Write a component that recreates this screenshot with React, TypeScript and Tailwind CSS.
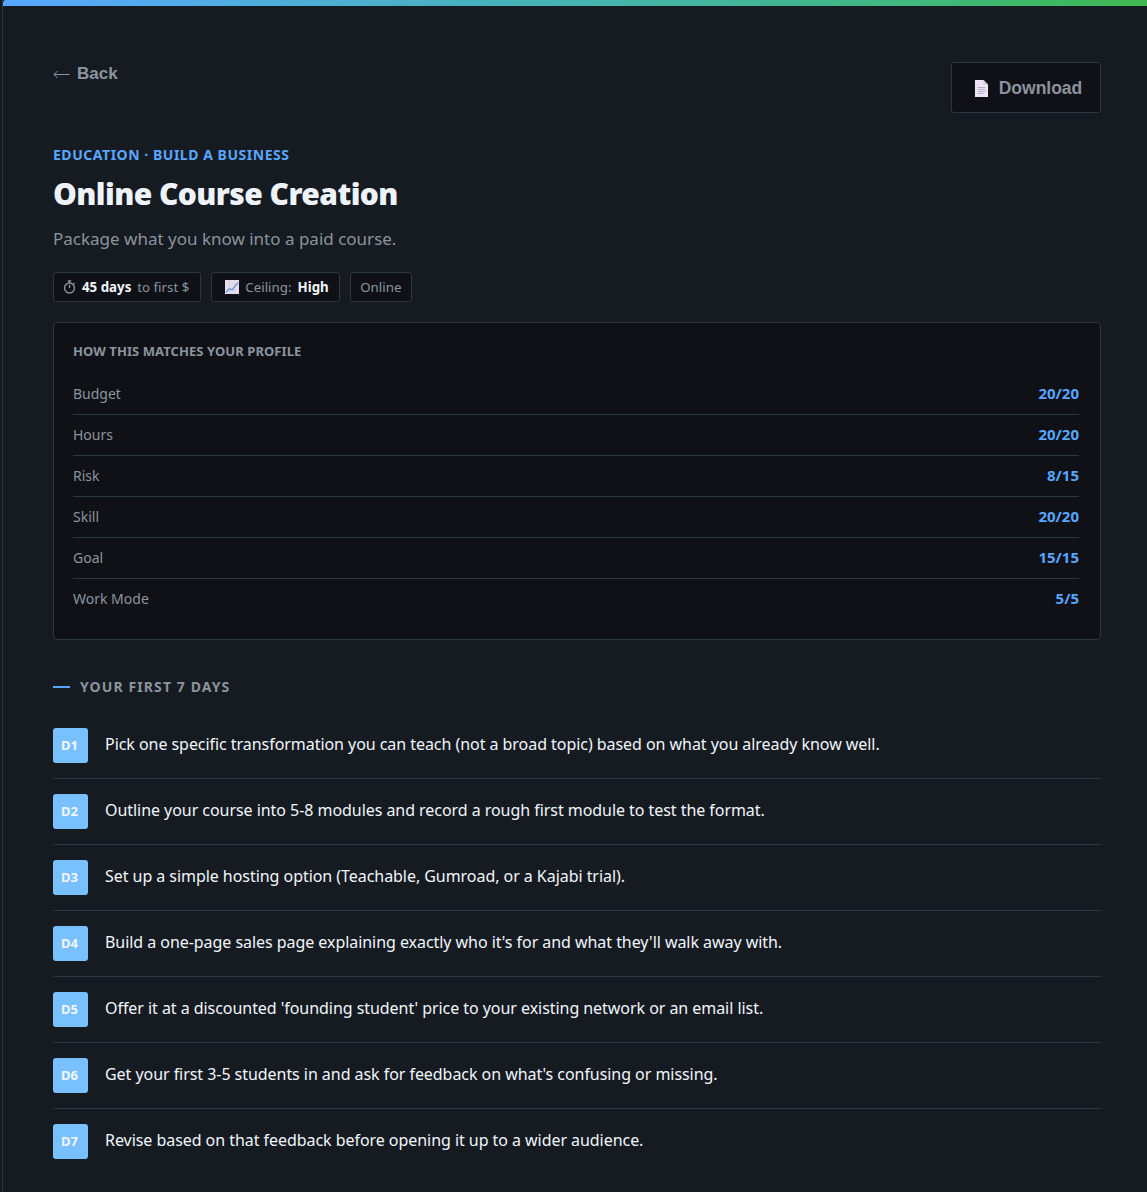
import { FC } from "react";

const SCORES = [
  { label: "Budget", value: "20/20" },
  { label: "Hours", value: "20/20" },
  { label: "Risk", value: "8/15" },
  { label: "Skill", value: "20/20" },
  { label: "Goal", value: "15/15" },
  { label: "Work Mode", value: "5/5" },
];

const DAYS = [
  "Pick one specific transformation you can teach (not a broad topic) based on what you already know well.",
  "Outline your course into 5-8 modules and record a rough first module to test the format.",
  "Set up a simple hosting option (Teachable, Gumroad, or a Kajabi trial).",
  "Build a one-page sales page explaining exactly who it's for and what they'll walk away with.",
  "Offer it at a discounted 'founding student' price to your existing network or an email list.",
  "Get your first 3-5 students in and ask for feedback on what's confusing or missing.",
  "Revise based on that feedback before opening it up to a wider audience.",
];

const ArrowIcon: FC = () => (
  <svg width="17" height="11" viewBox="0 0 17 11" fill="none" stroke="#8b949e" className="mt-[2px] shrink-0">
    <path d="M1 5.5H16.5M4.5 2L1 5.5L4.5 9" strokeWidth="1" />
  </svg>
);

const DocIcon: FC = () => (
  <svg width="13" height="17" viewBox="0 0 13 17" className="shrink-0">
    <path d="M0 0H8.5L13 4.5V17H0Z" fill="#ece6f4" />
    <path d="M8.5 0L13 4.5H8.5Z" fill="#c9c2d6" />
    <path d="M2.5 7.5H10.5M2.5 9.5H10.5M2.5 11.5H10.5M2.5 13.5H8.5" stroke="#a9a0c0" strokeWidth="0.8" />
  </svg>
);

const TimerIcon: FC = () => (
  <svg width="13" height="14" viewBox="0 0 13 14" fill="none" stroke="#8b949e" className="-ml-[1px] shrink-0">
    <circle cx="6.5" cy="8" r="5" strokeWidth="1.4" />
    <path d="M4.8 1H8.2M6.5 1V3M6.5 8V4.8M10.6 3L11.6 4" strokeWidth="1.3" />
  </svg>
);

const ChartIcon: FC = () => (
  <svg width="14" height="14" viewBox="0 0 14 14" className="shrink-0">
    <rect width="14" height="14" fill="#e6e0ee" />
    <path d="M0 4.7H14M0 9.4H14M4.7 0V14M9.4 0V14" stroke="#cfc8dc" strokeWidth="0.5" />
    <path d="M1 12.5L4.5 8.5L7 10L13 2.5" stroke="#6f9fe0" strokeWidth="1.4" fill="none" />
  </svg>
);

const Tag: FC<{ children: React.ReactNode }> = ({ children }) => (
  <div className="flex h-[30px] items-center rounded-[3px] border border-[#30363d] bg-[#0f1117] px-[10px] text-[13.3px] text-[#8b949e]">
    {children}
  </div>
);

export default function App() {
  return (
    <div className="min-h-[1192px] bg-[#161b22] pl-[2px] font-['Noto_Sans',sans-serif]">
      <div className="h-[1192px] overflow-hidden border-l border-[#30363d]">
        <div className="h-[6px] rounded-tl-[3px] bg-gradient-to-r from-[#58a6ff] to-[#3fb950]" />
        <div className="pl-[50px] pr-[46px]">
          <div className="flex items-start justify-between pt-[56px]">
            <button className="mt-[1px] flex h-[20px] items-center gap-[7px] font-['Liberation_Sans',sans-serif] text-[17px] font-bold leading-none text-[#8b949e]">
              <ArrowIcon />
              Back
            </button>
            <button className="flex h-[51px] w-[150px] items-center justify-center gap-[11px] rounded-[3px] border border-[#30363d] bg-[#0f1117] pl-[5px] pt-[1px] font-['Liberation_Sans',sans-serif] text-[17.5px] font-bold text-[#8b949e]">
              <DocIcon />
              Download
            </button>
          </div>
          <p className="mt-[33px] text-[14px] font-bold leading-[18px] tracking-[0.53px] text-[#58a6ff]">
            EDUCATION · BUILD A BUSINESS
          </p>
          <h1 className="mt-[10px] text-[30px] font-black leading-[40px] tracking-[-0.57px] text-[#eef3fa]">
            Online Course Creation
          </h1>
          <p className="mt-[13px] text-[17px] leading-[24px] text-[#8b949e]">
            Package what you know into a paid course.
          </p>
          <div className="mt-[21px] flex gap-[10px]">
            <Tag>
              <TimerIcon />
              <b className="ml-[6px] pt-[2px] font-bold text-[#f0f6fc]">45 days</b>
              <span className="ml-[6px] pr-[1px] pt-[2px]">to first $</span>
            </Tag>
            <Tag>
              <span className="ml-[3px]" />
              <ChartIcon />
              <span className="ml-[6px] pt-[2px]">Ceiling:</span>
              <b className="ml-[6px] pt-[2px] font-bold text-[#f0f6fc]">High</b>
            </Tag>
            <Tag>
              <span className="-mx-[0.5px] pt-[2px]">Online</span>
            </Tag>
          </div>

          <section className="mt-[20px] rounded-[4px] border border-[#30363d] bg-[#0f1117] pb-[19px] pl-[19px] pr-[21px] pt-[19px]">
            <h2 className="text-[13px] font-bold leading-[18px] tracking-[0.07px] text-[#8b949e]">
              HOW THIS MATCHES YOUR PROFILE
            </h2>
            <div className="mt-[14px]">
              {SCORES.map((score, i) => (
                <div
                  key={score.label}
                  className={`flex h-[41px] items-center justify-between pb-[2px] ${i < SCORES.length - 1 ? "border-b border-[#30363d]" : ""}`}
                >
                  <span className="text-[14px] text-[#8b949e]">{score.label}</span>
                  <span className="text-[15px] font-bold text-[#58a6ff]">{score.value}</span>
                </div>
              ))}
            </div>
          </section>

          <div className="mt-[38px] flex items-center gap-[10px]">
            <div className="h-[2px] w-[17px] bg-[#58a6ff]" />
            <h2 className="text-[14px] font-bold leading-[18px] tracking-[1.1px] text-[#8b949e]">
              YOUR FIRST 7 DAYS
            </h2>
          </div>
          <div className="mt-[17px]">
            {DAYS.map((day, i) => (
              <div
                key={day}
                className={`flex h-[66px] items-center gap-[17px] border-b ${i < DAYS.length - 1 ? "border-[#30363d]" : "border-transparent"}`}
              >
                <div className="flex h-[35px] w-[35px] shrink-0 items-center justify-center rounded-[3px] bg-[#79c0ff] pr-[2px] text-[13px] font-bold text-[#f0f6fc]">
                  D{i + 1}
                </div>
                <p className="pb-[4px] text-[16px] leading-[24px] tracking-[-0.05px] text-[#f0f6fc]">{day}</p>
              </div>
            ))}
          </div>
        </div>
      </div>
    </div>
  );
}
